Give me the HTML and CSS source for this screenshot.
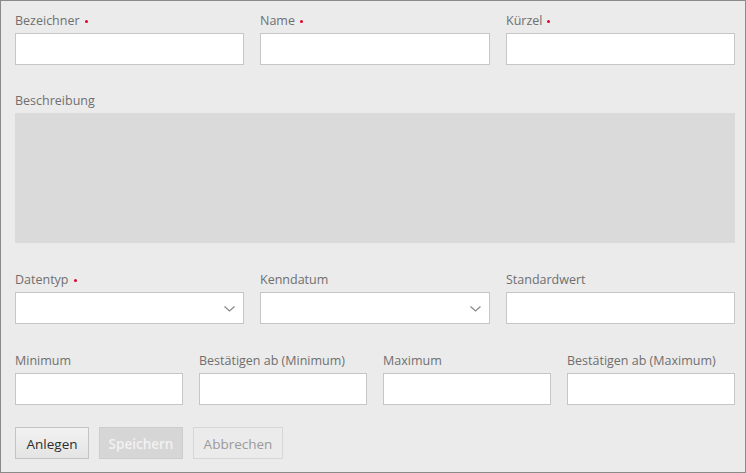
FILE: index.html
```html
<!DOCTYPE html>
<html lang="de">
<head>
<meta charset="utf-8">
<link rel="stylesheet" href="styles.css">
</head>
<body>
<form class="panel">
  <div class="row row-first cols-3">
    <div class="field">
      <label class="lbl">Bezeichner <span class="req"></span></label>
      <div class="input"></div>
    </div>
    <div class="field">
      <label class="lbl">Name <span class="req"></span></label>
      <div class="input"></div>
    </div>
    <div class="field">
      <label class="lbl">Kürzel <span class="req"></span></label>
      <div class="input"></div>
    </div>
  </div>
  <div class="row">
    <div class="field">
      <label class="lbl">Beschreibung</label>
      <div class="textarea"></div>
    </div>
  </div>
  <div class="row cols-3">
    <div class="field">
      <label class="lbl">Datentyp <span class="req"></span></label>
      <div class="input select">
        <svg class="chev" width="11" height="6" viewBox="0 0 11 6"><path d="M0.5 0.5 L5.5 5 L10.5 0.5" fill="none" stroke="#8a8a8a" stroke-width="1.3"/></svg>
      </div>
    </div>
    <div class="field">
      <label class="lbl">Kenndatum</label>
      <div class="input select">
        <svg class="chev" width="11" height="6" viewBox="0 0 11 6"><path d="M0.5 0.5 L5.5 5 L10.5 0.5" fill="none" stroke="#8a8a8a" stroke-width="1.3"/></svg>
      </div>
    </div>
    <div class="field">
      <label class="lbl">Standardwert</label>
      <div class="input"></div>
    </div>
  </div>
  <div class="row cols-4">
    <div class="field">
      <label class="lbl">Minimum</label>
      <div class="input"></div>
    </div>
    <div class="field">
      <label class="lbl">Bestätigen ab (Minimum)</label>
      <div class="input"></div>
    </div>
    <div class="field">
      <label class="lbl">Maximum</label>
      <div class="input"></div>
    </div>
    <div class="field">
      <label class="lbl">Bestätigen ab (Maximum)</label>
      <div class="input"></div>
    </div>
  </div>
  <div class="buttons">
    <button type="button" class="btn btn-primary">Anlegen</button>
    <button type="button" class="btn btn-disabled">Speichern</button>
    <button type="button" class="btn btn-ghost">Abbrechen</button>
  </div>
</form>
</body>
</html>
```

FILE: styles.css
```css
* { box-sizing: border-box; }
html, body { margin: 0; padding: 0; }
body {
  width: 746px;
  height: 473px;
  font-family: "Open Sans", "Noto Sans", sans-serif;
  font-size: 12.5px;
  background: #ebebeb;
}
.panel {
  width: 746px;
  height: 473px;
  border: 1px solid #8a8a8a;
  background: #ebebeb;
  padding: 11px 10px 0 14px;
  display: flex;
  flex-direction: column;
}
.row { display: grid; gap: 16px; margin-bottom: 28px; }
.row-first { margin-bottom: 27px; }
.cols-3 { grid-template-columns: 229px 230px 229px; }
.cols-4 { grid-template-columns: repeat(4, 168px); margin-bottom: 22px; }
.field { display: flex; flex-direction: column; }
.lbl {
  height: 17px;
  line-height: 17px;
  color: #6f6f6f;
  margin-bottom: 4px;
  white-space: nowrap;
  display: flex;
  align-items: center;
}
.req {
  display: inline-block;
  width: 3px;
  height: 3px;
  border-radius: 50%;
  background: #e0002a;
  margin-left: 5px;
  margin-top: 1px;
}
.input {
  height: 32px;
  background: #fff;
  border: 1px solid #c6c6c6;
  position: relative;
}
.select .chev {
  position: absolute;
  right: 8px;
  top: 13px;
}
.textarea {
  height: 130px;
  background: #dadada;
}
.buttons { display: flex; gap: 10px; }
.btn {
  height: 32px;
  font-family: inherit;
  font-size: 13.5px;
  padding: 2px 0 0;
  border: 1px solid #c4c4c4;
  border-radius: 0;
  margin: 0;
}
.btn-primary {
  background: linear-gradient(#f2f2f2, #e4e4e4);
  color: #2e2e2e;
  width: 74px;
}
.btn-disabled {
  background: #d6d6d6;
  border-color: #cccccc;
  color: #f2f2f2;
  font-weight: 600;
  width: 84px;
}
.btn-ghost {
  background: #ebebeb;
  border-color: #d6d6d6;
  color: #9a9a9a;
  width: 90px;
}
```
